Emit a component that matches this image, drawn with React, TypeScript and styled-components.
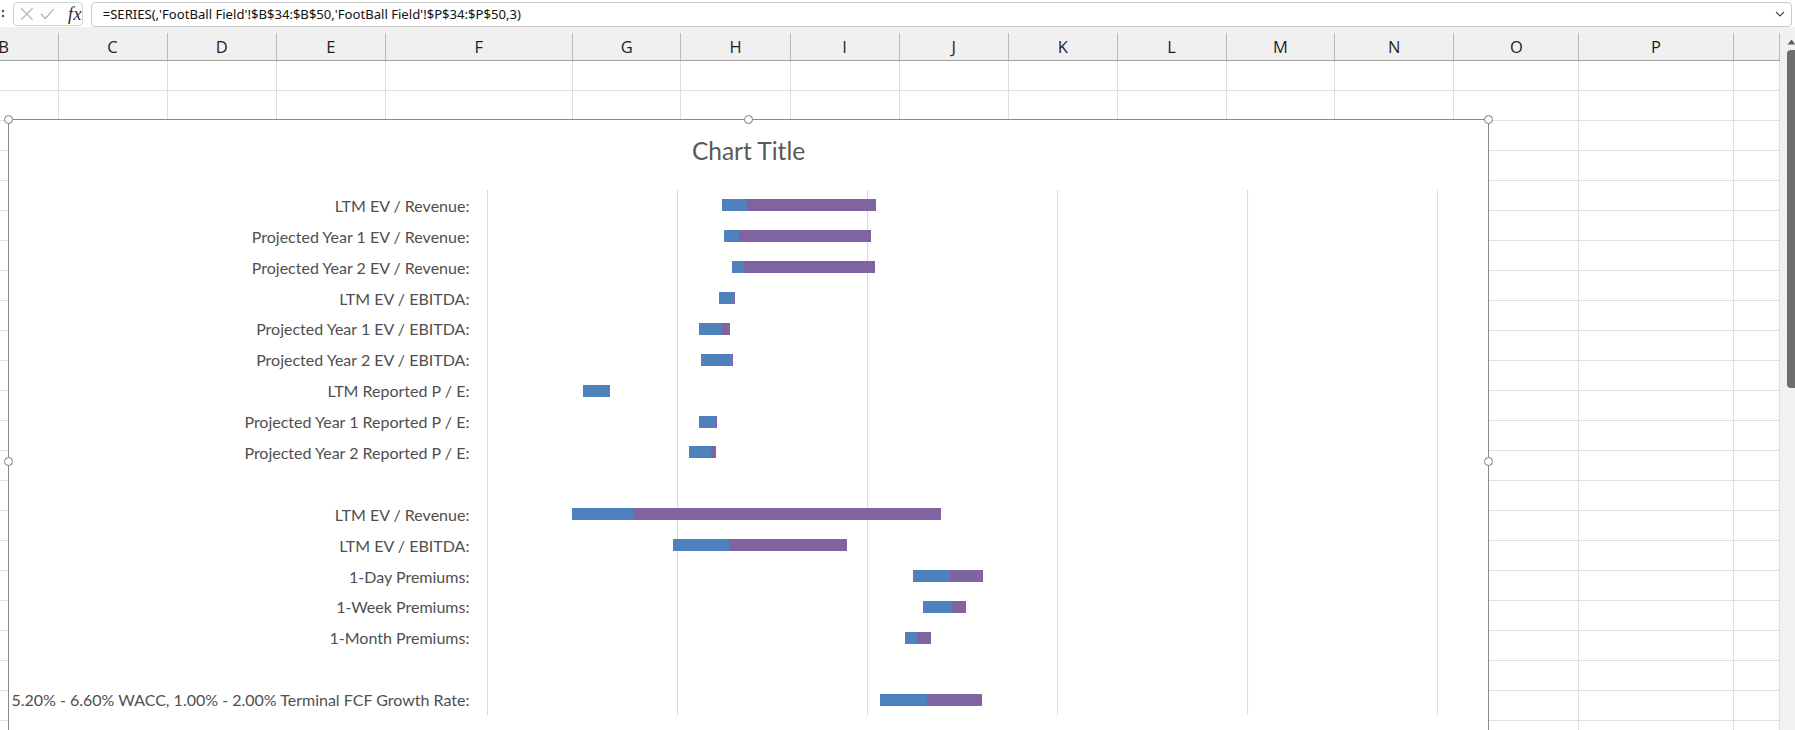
import React from 'react';
import styled, { createGlobalStyle } from 'styled-components';

const GlobalStyle = createGlobalStyle`
  html, body {
    margin: 0;
    padding: 0;
    background: #ffffff;
    overflow: hidden;
  }
  * {
    box-sizing: border-box;
  }
`;

// column widths (px) as they show on screen, B starts off-screen
const columns = [
  { letter: 'B', w: 109 },
  { letter: 'C', w: 109.1 },
  { letter: 'D', w: 109.1 },
  { letter: 'E', w: 109.1 },
  { letter: 'F', w: 187.1 },
  { letter: 'G', w: 108.6 },
  { letter: 'H', w: 109.1 },
  { letter: 'I', w: 109.1 },
  { letter: 'J', w: 109 },
  { letter: 'K', w: 109.1 },
  { letter: 'L', w: 108.8 },
  { letter: 'M', w: 108.9 },
  { letter: 'N', w: 118.8 },
  { letter: 'O', w: 125.2 },
  { letter: 'P', w: 154.1 },
  { letter: '', w: 46.4 }, // Q, hidden under the scrollbar
];

type Row = {
  label: string;
  start?: number;
  low?: number;
  high?: number;
};

// start = offset from the plot's left edge, low / high = segment lengths
const rows: Row[] = [
  { label: 'LTM EV / Revenue:', start: 235.5, low: 24.9, high: 128.9 },
  { label: 'Projected Year 1 EV / Revenue:', start: 237.4, low: 14.9, high: 132.1 },
  { label: 'Projected Year 2 EV / Revenue:', start: 245.4, low: 11.9, high: 131.3 },
  { label: 'LTM EV / EBITDA:', start: 232.4, low: 15.2, high: 0.8 },
  { label: 'Projected Year 1 EV / EBITDA:', start: 212.4, low: 23, high: 8 },
  { label: 'Projected Year 2 EV / EBITDA:', start: 214.3, low: 31, high: 1.1 },
  { label: 'LTM Reported P / E:', start: 96.4, low: 26.8, high: 0 },
  { label: 'Projected Year 1 Reported P / E:', start: 212.4, low: 16.5, high: 1.5 },
  { label: 'Projected Year 2 Reported P / E:', start: 202.4, low: 21.9, high: 4.9 },
  { label: '' },
  { label: 'LTM EV / Revenue:', start: 85.4, low: 61.2, high: 307.7 },
  { label: 'LTM EV / EBITDA:', start: 186.4, low: 55.9, high: 118.1 },
  { label: '1-Day Premiums:', start: 426.4, low: 37.2, high: 32.9 },
  { label: '1-Week Premiums:', start: 436.4, low: 29, high: 13.8 },
  { label: '1-Month Premiums:', start: 418.4, low: 11.9, high: 14.1 },
  { label: '' },
  { label: '5.20% - 6.60% WACC, 1.00% - 2.00% Terminal FCF Growth Rate:', start: 393.5, low: 47.1, high: 54.7 },
];

const handles = [
  { left: -5, top: -5 },
  { left: 734.5, top: -5 },
  { left: 1475, top: -5 },
  { left: -5, top: 336.5 },
  { left: 1475, top: 336.5 },
];

export default function App() {
  return (
    <>
      <GlobalStyle />
      <Page>
        <FormulaBar>
          <Grip>
            <svg width="6" height="20" viewBox="0 0 6 20">
              <circle cx="3" cy="7" r="1.3" fill="#5a5a5a" />
              <circle cx="3" cy="12" r="1.3" fill="#5a5a5a" />
            </svg>
          </Grip>
          <FxBox>
            <svg width="14" height="14" viewBox="0 0 14 14">
              <path d="M1 1 L13 13 M13 1 L1 13" stroke="#a9a9a9" strokeWidth="1.1" fill="none" />
            </svg>
            <svg width="15" height="12" viewBox="0 0 15 12">
              <path d="M1 6 L5.5 10.5 L14 1" stroke="#a9a9a9" strokeWidth="1.1" fill="none" />
            </svg>
            <Fx>fx</Fx>
          </FxBox>
          <FormulaInput>
            <FormulaText>=SERIES(,'FootBall Field'!$B$34:$B$50,'FootBall Field'!$P$34:$P$50,3)</FormulaText>
            <svg width="10" height="6" viewBox="0 0 10 6">
              <path d="M1 1 L5 5 L9 1" stroke="#444" strokeWidth="1.1" fill="none" />
            </svg>
          </FormulaInput>
        </FormulaBar>

        <SheetWrap>
          <Sheet>
            <HeaderRow>
              {columns.map((c, i) => (
                <ColHeader key={i} $w={c.w}>{c.letter}</ColHeader>
              ))}
            </HeaderRow>
            <CellArea>
              {columns.map((c, i) => (
                <ColCells key={i} $w={c.w} />
              ))}
            </CellArea>

            <ChartObject>
              {handles.map((h, i) => (
                <Handle key={i} style={{ left: h.left, top: h.top }} />
              ))}
              <ChartTitle>Chart Title</ChartTitle>
              <PlotGrid>
                <Labels>
                  {rows.map((r, i) => (
                    <Label key={i}>{r.label}</Label>
                  ))}
                </Labels>
                <PlotArea>
                  {rows.map((r, i) => (
                    <BarRow key={i}>
                      {r.start !== undefined && (
                        <Bar style={{ marginLeft: r.start }}>
                          <Segment $tone="blue" style={{ width: r.low }} />
                          <Segment $tone="purple" style={{ width: r.high }} />
                        </Bar>
                      )}
                    </BarRow>
                  ))}
                </PlotArea>
              </PlotGrid>
            </ChartObject>
          </Sheet>

          <ScrollBar>
            <ScrollArrow>
              <svg width="9" height="6" viewBox="0 0 9 6">
                <path d="M0.5 5.5 L4.5 0.5 L8.5 5.5 Z" fill="#606060" />
              </svg>
            </ScrollArrow>
            <Thumb />
          </ScrollBar>
        </SheetWrap>
      </Page>
    </>
  );
}

// Styled Components
const Page = styled.div`
  width: 1795px;
  height: 730px;
  overflow: hidden;
  display: flex;
  flex-direction: column;
  background: #ffffff;
`;

const FormulaBar = styled.div`
  height: 27px;
  flex: 0 0 27px;
  display: flex;
  align-items: center;
  padding-right: 3px;
  background: #ffffff;
`;

const Grip = styled.div`
  width: 12.7px;
  height: 27px;
  display: flex;
  align-items: center;
`;

const FxBox = styled.div`
  width: 70.3px;
  height: 23.5px;
  margin-top: 1px;
  border: 1px solid #d3d3d3;
  border-radius: 4px;
  display: flex;
  align-items: center;
  gap: 7px;
  padding-left: 6px;
`;

const Fx = styled.span`
  font-family: "Liberation Serif", "DejaVu Serif", serif;
  font-style: italic;
  font-size: 18px;
  color: #2b2b2b;
  margin-left: 6px;
  letter-spacing: 0.5px;
`;

const FormulaInput = styled.div`
  flex: 1;
  height: 25px;
  margin-left: 7.7px;
  margin-top: 1px;
  border: 1px solid #c9c9c9;
  border-radius: 4px;
  display: flex;
  align-items: center;
  justify-content: space-between;
  padding: 0 6px 0 11px;
`;

const FormulaText = styled.span`
  font-family: "Noto Sans", "Open Sans", sans-serif;
  font-size: 13.1px;
  color: #111;
  white-space: nowrap;
`;

const SheetWrap = styled.div`
  flex: 1;
  display: flex;
  min-height: 0;
`;

const Sheet = styled.div`
  position: relative;
  width: 1780px;
  flex: 0 0 1780px;
  overflow: hidden;
  display: flex;
  flex-direction: column;
`;

const HeaderRow = styled.div`
  height: 34px;
  flex: 0 0 34px;
  display: flex;
  margin-left: -50.5px;
  padding-top: 6px;
  background: #f0f0f0;
  border-bottom: 1px solid #a0a0a0;
`;

const ColHeader = styled.div<{ $w: number }>`
  width: ${(p) => p.$w}px;
  flex: 0 0 ${(p) => p.$w}px;
  height: 27px;
  border-right: 1px solid #b9b9b9;
  display: flex;
  align-items: center;
  justify-content: center;
  font-family: "Open Sans", "Noto Sans", sans-serif;
  font-size: 16.5px;
  color: #1e1e1e;
`;

const CellArea = styled.div`
  flex: 1;
  display: flex;
  margin-left: -50.5px;
`;

const ColCells = styled.div<{ $w: number }>`
  width: ${(p) => p.$w}px;
  flex: 0 0 ${(p) => p.$w}px;
  border-right: 1px solid #dedede;
  background: repeating-linear-gradient(
    to bottom,
    transparent 0,
    transparent 29px,
    #e0e0e0 29px,
    #e0e0e0 30px
  );
`;

const ChartObject = styled.div`
  position: absolute;
  left: 8px;
  top: 92px;
  width: 1481px;
  height: 660px;
  background: #ffffff;
  border: 1px solid #8a8a8a;
  display: flex;
  flex-direction: column;
`;

const Handle = styled.div`
  position: absolute;
  width: 9px;
  height: 9px;
  border-radius: 50%;
  border: 1.5px solid #7b7b7b;
  background: #ffffff;
  z-index: 2;
`;

const ChartTitle = styled.div`
  margin-top: 14.5px;
  height: 31px;
  line-height: 31px;
  text-align: center;
  font-family: Lato, "Open Sans", sans-serif;
  font-size: 24.5px;
  color: #595959;
  margin-bottom: 24.5px;
`;

const PlotGrid = styled.div`
  display: grid;
  grid-template-columns: 460.4px 951.2px;
  column-gap: 17.2px;
  height: 525px;
`;

const Labels = styled.div`
  display: grid;
  grid-template-rows: repeat(17, 1fr);
`;

const Label = styled.div`
  display: flex;
  align-items: center;
  justify-content: flex-end;
  white-space: nowrap;
  font-family: Lato, "Open Sans", sans-serif;
  font-size: 16px;
  color: #4f4f4f;
`;

const PlotArea = styled.div`
  display: grid;
  grid-template-rows: repeat(17, 1fr);
  background-image: linear-gradient(to right, #d9d9d9 0, #d9d9d9 1px, transparent 1px);
  background-size: 190.04px 100%;
  background-repeat: repeat-x;
`;

const BarRow = styled.div`
  display: flex;
  align-items: center;
`;

const Bar = styled.div`
  display: flex;
  height: 12px;
`;

const Segment = styled.div<{ $tone: 'blue' | 'purple' }>`
  height: 100%;
  background: ${(p) => (p.$tone === 'blue' ? '#4f81bd' : '#8064a2')};
`;

const ScrollBar = styled.div`
  width: 15px;
  flex: 0 0 15px;
  background: #f1f1f1;
  display: flex;
  flex-direction: column;
  align-items: flex-end;
  padding-top: 12px;
`;

const ScrollArrow = styled.div`
  width: 9px;
  height: 6px;
  display: flex;
  margin-right: -1px;
`;

const Thumb = styled.div`
  margin-top: 5px;
  width: 8px;
  height: 338px;
  background: #6e6e6e;
  border-radius: 4px 0 0 4px;
`;
